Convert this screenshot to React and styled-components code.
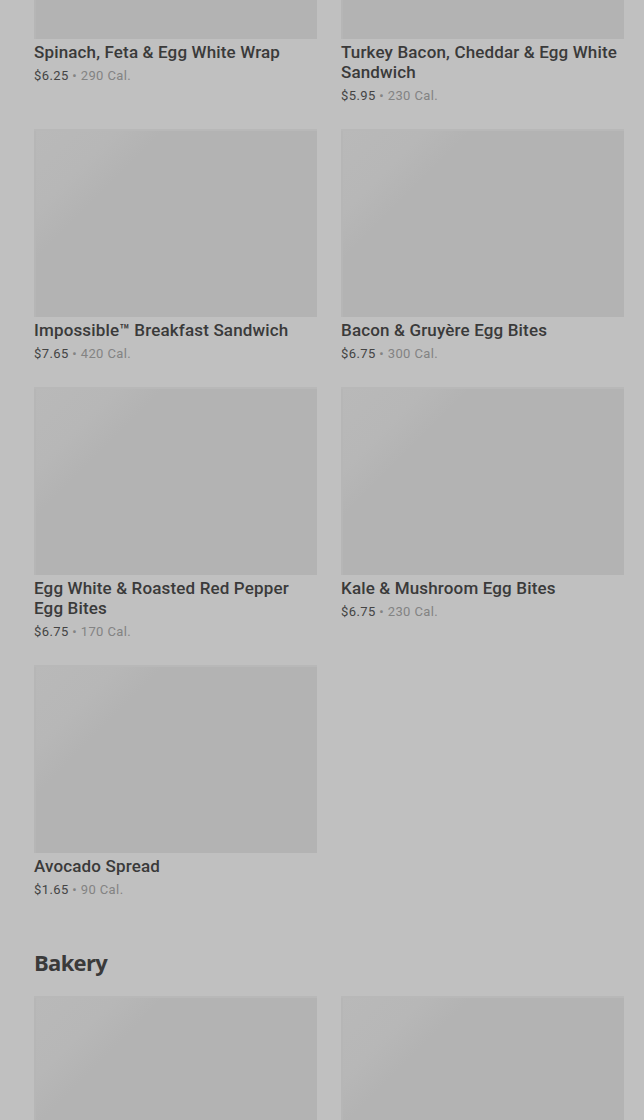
import React from "react";
import styled, { createGlobalStyle } from "styled-components";

const GlobalStyle = createGlobalStyle`
  html, body {
    margin: 0;
    padding: 0;
    background: #c0c0c0;
    overflow: hidden;
  }
  body {
    font-family: Roboto, "Liberation Sans", sans-serif;
  }
`;

const Page = styled.div`
  width: 644px;
  height: 1120px;
  overflow: hidden;
  background: #c0c0c0;
`;

const Content = styled.div`
  margin-top: -149px;
  padding: 0 20px 0 34px;
`;

const Grid = styled.div`
  display: grid;
  grid-template-columns: 283px 283px;
  column-gap: 24px;
  row-gap: 23px;
`;

const Card = styled.div`
  display: flex;
  flex-direction: column;
`;

const Thumb = styled.div`
  height: 188px;
  background: linear-gradient(135deg, #b9b9b9 0%, #b7b7b7 18%, #b3b3b3 28%, #b3b3b3 100%);
  box-shadow: inset 0 2px 0 #b8b8b8, inset 2px 0 0 #b6b6b6;
`;

const Title = styled.div`
  margin-top: 3px;
  font-size: 17px;
  line-height: 20px;
  font-weight: 500;
  color: #3a3a3a;
  letter-spacing: 0.15px;
`;

const Meta = styled.div`
  margin-top: 4px;
  height: 20px;
  font-size: 13px;
  line-height: 20px;
  color: #444;
  letter-spacing: 0.4px;
`;

const Cal = styled.span`
  color: #838383;
`;

const SectionTitle = styled.h2`
  margin: 47px 0 19px;
  font-family: "Open Sans", "Liberation Sans", sans-serif;
  font-size: 22px;
  line-height: 30px;
  font-weight: 700;
  letter-spacing: -0.7px;
  color: #3a3a3a;
`;

const breakfast = [
  { name: "Spinach, Feta & Egg White Wrap", price: "$6.25", cal: 290 },
  { name: "Turkey Bacon, Cheddar & Egg White Sandwich", price: "$5.95", cal: 230 },
  { name: "Impossible™ Breakfast Sandwich", price: "$7.65", cal: 420 },
  { name: "Bacon & Gruyère Egg Bites", price: "$6.75", cal: 300 },
  { name: "Egg White & Roasted Red Pepper Egg Bites", price: "$6.75", cal: 170 },
  { name: "Kale & Mushroom Egg Bites", price: "$6.75", cal: 230 },
  { name: "Avocado Spread", price: "$1.65", cal: 90 },
];

function Item({ item }) {
  return (
    <Card>
      <Thumb />
      {item && (
        <>
          <Title>{item.name}</Title>
          <Meta>
            {item.price} <Cal>• {item.cal} Cal.</Cal>
          </Meta>
        </>
      )}
    </Card>
  );
}

export default function App() {
  return (
    <Page>
      <GlobalStyle />
      <Content>
        <Grid>
          {breakfast.map((item) => (
            <Item key={item.name} item={item} />
          ))}
        </Grid>
        <SectionTitle>Bakery</SectionTitle>
        <Grid>
          <Item />
          <Item />
        </Grid>
      </Content>
    </Page>
  );
}
